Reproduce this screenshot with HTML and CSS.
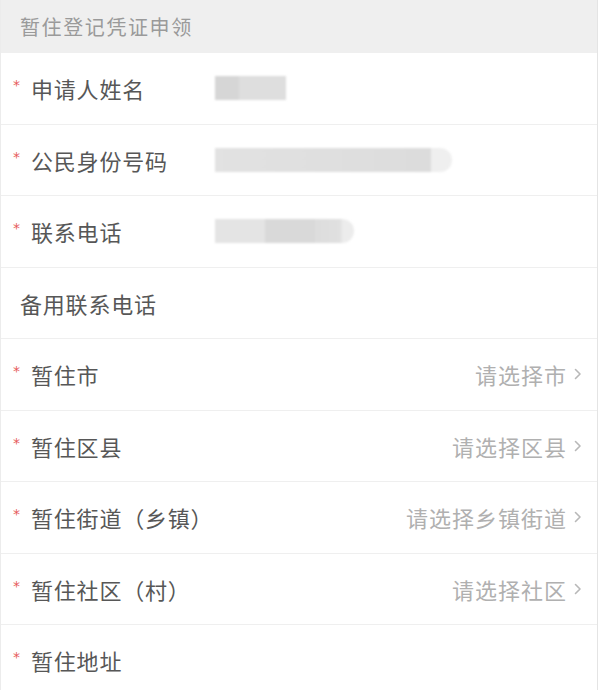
FILE: index.html
```html
<!DOCTYPE html>
<html lang="zh-CN">
<head>
<meta charset="utf-8">
<title>暂住登记凭证申领</title>
<link rel="stylesheet" href="styles.css">
</head>
<body>
<div class="page">
  <div class="section-title">暂住登记凭证申领</div>

  <div class="row">
    <div class="label"><span class="star">*</span>申请人姓名</div>
    <div class="value"><span class="blur blur-name"></span></div>
  </div>

  <div class="row">
    <div class="label"><span class="star">*</span>公民身份号码</div>
    <div class="value"><span class="blur blur-id"></span></div>
  </div>

  <div class="row">
    <div class="label"><span class="star">*</span>联系电话</div>
    <div class="value"><span class="blur blur-phone"></span></div>
  </div>

  <div class="row">
    <div class="label plain">备用联系电话</div>
    <div class="value"></div>
  </div>

  <div class="row">
    <div class="label"><span class="star">*</span>暂住市</div>
    <div class="value"></div>
    <div class="picker">请选择市<svg class="chev" viewBox="0 0 8 12" width="8" height="12"><path d="M1.5 1.5 L6 6 L1.5 10.5"/></svg></div>
  </div>

  <div class="row">
    <div class="label"><span class="star">*</span>暂住区县</div>
    <div class="value"></div>
    <div class="picker">请选择区县<svg class="chev" viewBox="0 0 8 12" width="8" height="12"><path d="M1.5 1.5 L6 6 L1.5 10.5"/></svg></div>
  </div>

  <div class="row">
    <div class="label"><span class="star">*</span>暂住街道（乡镇）</div>
    <div class="value"></div>
    <div class="picker">请选择乡镇街道<svg class="chev" viewBox="0 0 8 12" width="8" height="12"><path d="M1.5 1.5 L6 6 L1.5 10.5"/></svg></div>
  </div>

  <div class="row">
    <div class="label"><span class="star">*</span>暂住社区（村）</div>
    <div class="value"></div>
    <div class="picker">请选择社区<svg class="chev" viewBox="0 0 8 12" width="8" height="12"><path d="M1.5 1.5 L6 6 L1.5 10.5"/></svg></div>
  </div>

  <div class="row">
    <div class="label"><span class="star">*</span>暂住地址</div>
    <div class="value"></div>
  </div>
</div>
</body>
</html>
```

FILE: styles.css
```css
html, body {
  margin: 0;
  padding: 0;
  background: #ffffff;
}

body {
  font-family: "Noto Sans CJK SC", "Noto Sans", sans-serif;
  color: #555555;
}

.page {
  width: 598px;
  box-sizing: border-box;
  border-left: 1px solid #ececec;
  border-right: 1px solid #e4e4e4;
  min-height: 690px;
  background: #ffffff;
}

.section-title {
  height: 53px;
  line-height: 53px;
  padding-left: 19px;
  background: #efefef;
  color: #9a9a9a;
  font-size: 20px;
  letter-spacing: 1.6px;
}

.row {
  display: grid;
  grid-template-columns: 203px 1fr auto;
  align-items: center;
  height: 71.5px;
  box-sizing: border-box;
  border-bottom: 1px solid #efefef;
  padding: 0 15px 0 11px;
}

.label {
  display: flex;
  align-items: flex-start;
  font-size: 22px;
  letter-spacing: 0.8px;
  line-height: 30px;
  color: #575757;
  white-space: nowrap;
}

.label.plain {
  padding-left: 8px;
}

.star {
  width: 18px;
  flex: none;
  color: #e65a5a;
  font-size: 14px;
  line-height: 14px;
  margin-top: 5px;
  padding-left: 1px;
  font-family: "DejaVu Sans", sans-serif;
}

.value {
  display: flex;
  align-items: center;
}

.blur {
  display: block;
  height: 24px;
  filter: blur(1.2px);
}

.blur-name {
  width: 71px;
  background: linear-gradient(90deg, #d6d6d6 0, #d6d6d6 24px, #dedede 24px, #dedede 100%);
}

.blur-id {
  width: 237px;
  border-radius: 0 12px 12px 0;
  background: linear-gradient(90deg, #e2e2e2 0, #dfdfdf 120px, #dcdcdc 216px, #efefef 216px, #efefef 100%);
}

.blur-phone {
  width: 139px;
  border-radius: 0 12px 12px 0;
  background: linear-gradient(90deg, #e4e4e4 0, #e4e4e4 50px, #d9d9d9 50px, #d9d9d9 100px, #dddddd 100px, #e0e0e0 125px, #ececec 128px, #ececec 100%);
}

.picker {
  display: flex;
  align-items: center;
  font-size: 22px;
  letter-spacing: 1px;
  color: #b0b0b0;
  white-space: nowrap;
}

.chev {
  margin-left: 7px;
  fill: none;
  stroke: #b8b8b8;
  stroke-width: 1.6;
  stroke-linecap: round;
  stroke-linejoin: round;
}
```
